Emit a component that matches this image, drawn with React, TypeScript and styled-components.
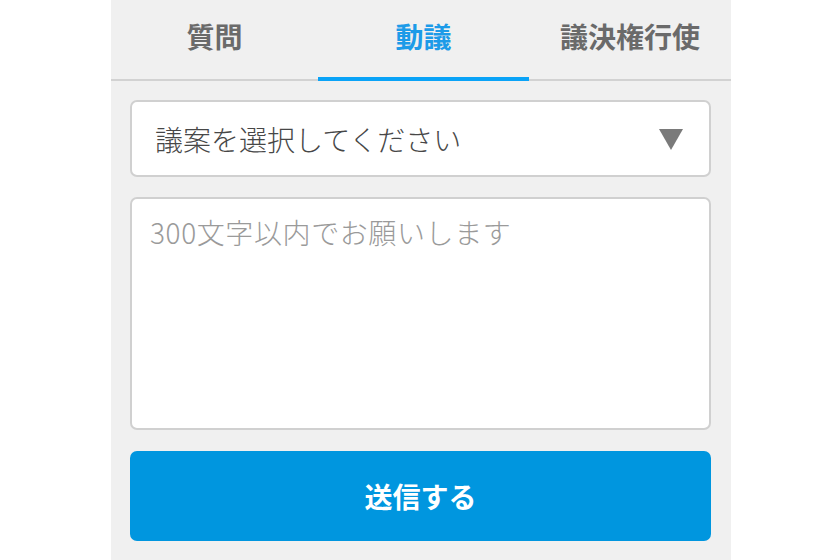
import React from "react";
import styled, { createGlobalStyle } from "styled-components";

const Global = createGlobalStyle`
  html, body { margin: 0; padding: 0; background: #ffffff; }
  body { font-family: "Noto Sans CJK JP", "Noto Sans", sans-serif; }
  * { box-sizing: border-box; }
`;

const Page = styled.div`
  width: 840px;
  height: 560px;
  overflow: hidden;
  background: #ffffff;
`;

const Panel = styled.div`
  margin-left: 111px;
  width: 620px;
  height: 560px;
  background: #f0f0f0;
  display: flex;
  flex-direction: column;
`;

const TabBar = styled.div`
  display: grid;
  grid-template-columns: 207px 211px 1fr;
  height: 81px;
  border-bottom: 2px solid #d2d2d2;
`;

const Tab = styled.div<{ $active?: boolean }>`
  position: relative;
  display: flex;
  align-items: center;
  justify-content: center;
  padding-bottom: 8px;
  font-size: 28px;
  font-weight: 700;
  color: ${(p) => (p.$active ? "#1d9be8" : "#6a6a6a")};
  &::after {
    content: "";
    display: ${(p) => (p.$active ? "block" : "none")};
    position: absolute;
    left: 0;
    right: 0;
    bottom: -2px;
    height: 4px;
    background: #0aa3f7;
  }
`;

const Body = styled.div`
  display: flex;
  flex-direction: column;
  gap: 20px;
  padding: 19px 20px 0 19px;
`;

const Select = styled.div`
  height: 77px;
  background: #ffffff;
  border: 2px solid #d0d0d0;
  border-radius: 7px;
  display: flex;
  align-items: center;
  justify-content: space-between;
  padding: 0 26px 0 23px;
  font-size: 28px;
  font-weight: 300;
  color: #474747;
`;

const Arrow = styled.svg`
  width: 24px;
  height: 21px;
  margin-top: 2px;
`;

const TextArea = styled.div`
  height: 233px;
  background: #ffffff;
  border: 2px solid #d0d0d0;
  border-radius: 7px;
  padding: 13px 18px;
  font-size: 28px;
  font-weight: 300;
  line-height: 40px;
  letter-spacing: 0.6px;
  color: #9a9a9a;
`;

const Submit = styled.div`
  margin-top: 1px;
  height: 90px;
  background: #0096df;
  border-radius: 7px;
  display: flex;
  align-items: center;
  justify-content: center;
  color: #ffffff;
  font-size: 28px;
  font-weight: 700;
`;

export default function App() {
  return (
    <Page>
      <Global />
      <Panel>
        <TabBar>
          <Tab>質問</Tab>
          <Tab $active>動議</Tab>
          <Tab>議決権行使</Tab>
        </TabBar>
        <Body>
          <Select>
            <span>議案を選択してください</span>
            <Arrow viewBox="0 0 24 21">
              <polygon points="0,0 24,0 12,21" fill="#7a7a7a" />
            </Arrow>
          </Select>
          <TextArea>300文字以内でお願いします</TextArea>
          <Submit>送信する</Submit>
        </Body>
      </Panel>
    </Page>
  );
}
